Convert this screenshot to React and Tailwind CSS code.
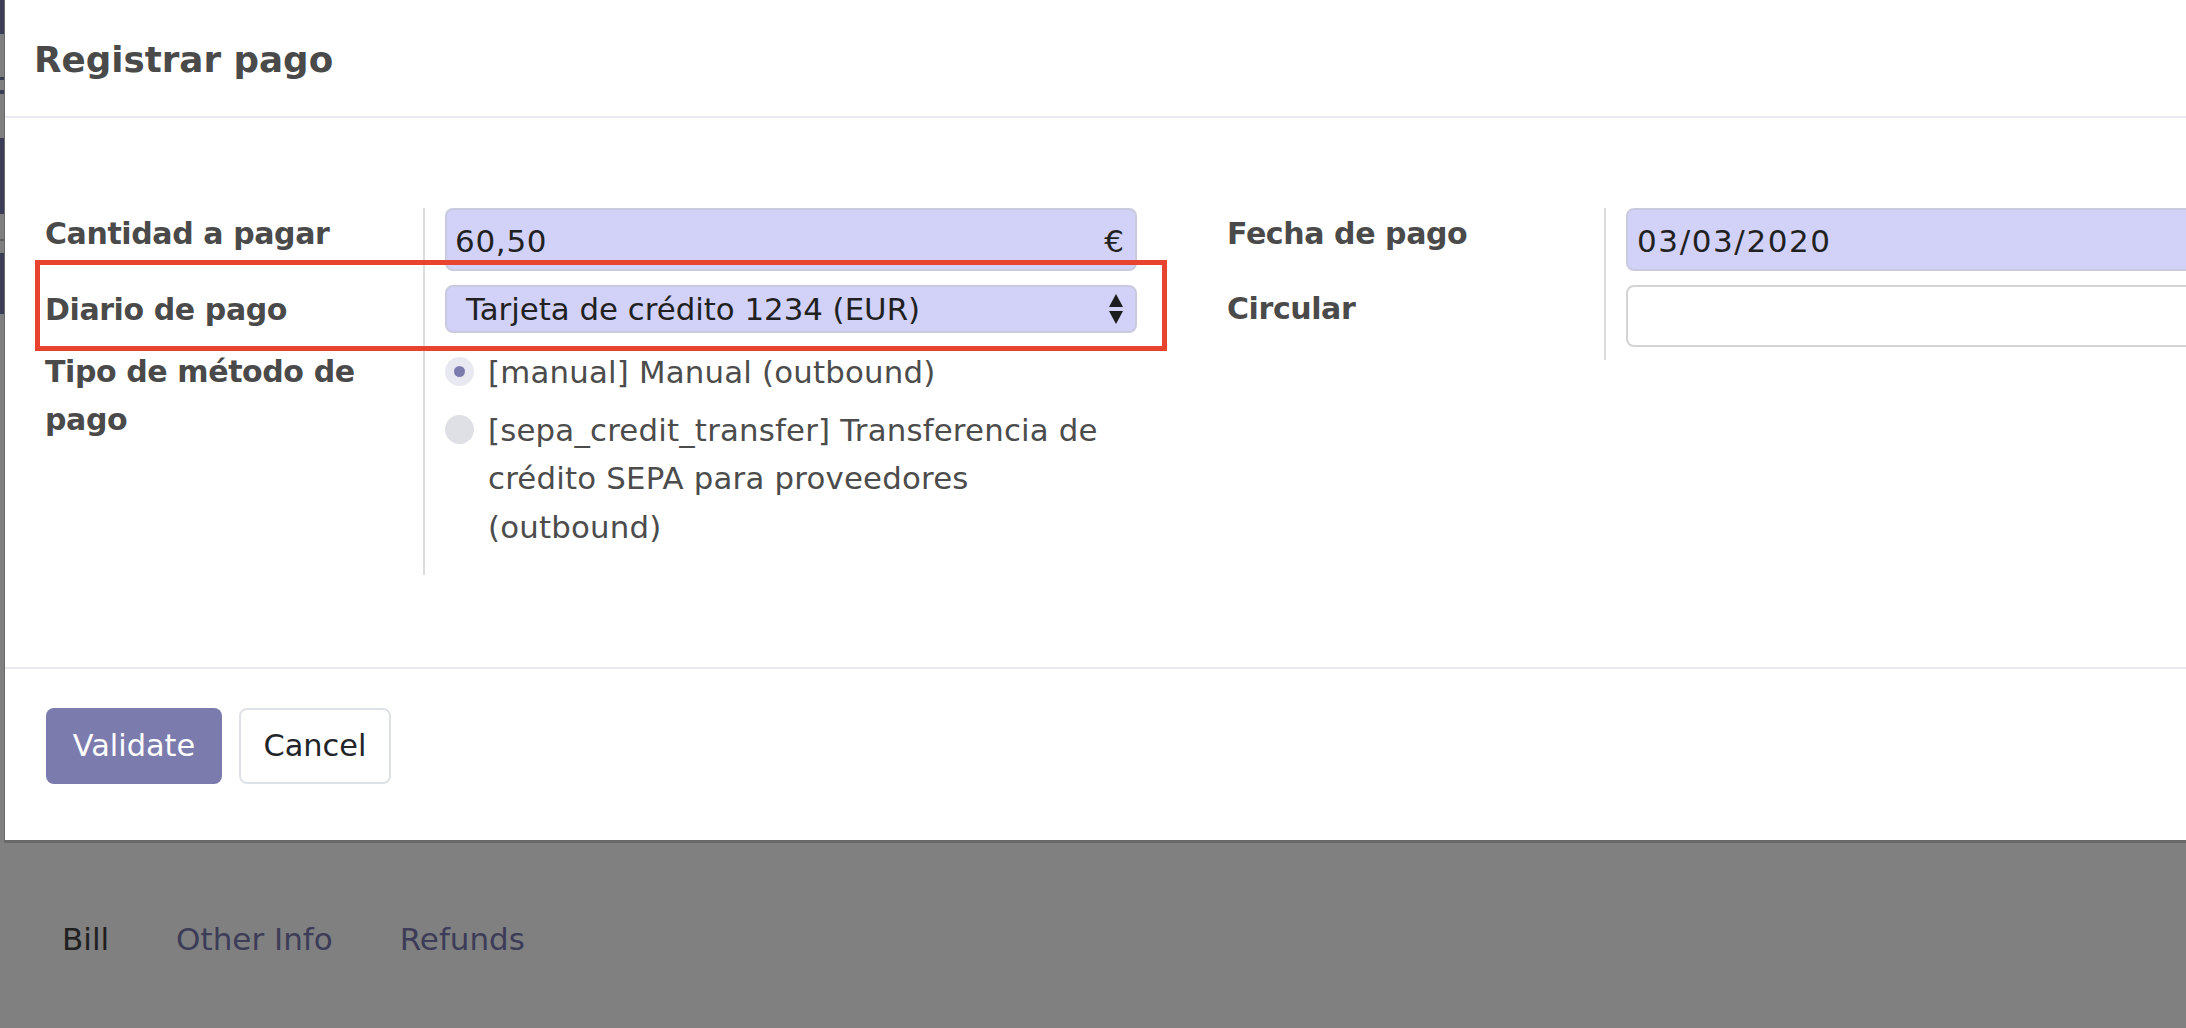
import React from 'react';

const navy = 'bg-[#3b3c56]';

function Strip() {
  // dimmed page behind the dialog, only a sliver shows on the left
  return (
    <div className="w-[4px] shrink-0 flex flex-col bg-[#7f7f7f]">
      <div className={`h-[34px] ${navy}`} />
      <div className="h-[43px]" />
      <div className={`h-[3px] ${navy}`} />
      <div className="h-[10px]" />
      <div className={`h-[4px] ${navy}`} />
      <div className="h-[44px]" />
      <div className={`h-[76px] ${navy}`} />
      <div className="h-[25px]" />
      <div className="h-[2px] bg-[#5c5c5c]" />
      <div className="h-[12px]" />
      <div className={`h-[61px] ${navy}`} />
    </div>
  );
}

function UpDown() {
  return (
    <svg width="14" height="30" viewBox="0 0 14 30" className="shrink-0">
      <path d="M7 0 L14 13 L0 13 Z" fill="#1c1c1c" />
      <path d="M0 17 L14 17 L7 30 Z" fill="#1c1c1c" />
    </svg>
  );
}

function Radio({ checked, children }) {
  return (
    <div className="flex items-start">
      <span
        className={`mt-[9px] w-[29px] h-[29px] rounded-full shrink-0 flex items-center justify-center ${
          checked ? 'bg-[#e8e8f1]' : 'bg-[#dfe0e6]'
        }`}
      >
        {checked && <span className="w-[11px] h-[11px] rounded-full bg-[#7c7bad]" />}
      </span>
      <span className="ml-[14px] max-w-[620px] text-[30.8px] leading-[48.5px] text-[#4c4c4c] tracking-[0.2px]">{children}</span>
    </div>
  );
}

const label = 'text-[30px] leading-[48px] font-bold text-[#4a4a4a] tracking-[-0.4px]';
const cell = 'border-l-2 border-[#dcdcdc] pl-[20px]';

export default function App() {
  return (
    <div className="w-full h-[1028px] bg-[#808080] overflow-hidden flex flex-col font-['DejaVu_Sans',sans-serif]">
      <div className="flex h-[843px] shrink-0">
        <Strip />
        <div className="relative flex-1 min-w-0 bg-white border-l border-b-[3px] border-[#6a6a6a] flex flex-col overflow-hidden">
          <header className="h-[118px] shrink-0 border-b-2 border-[#e9e9ef] pt-[42px] pl-[29px]">
            <h4 className="text-[35.7px] leading-none font-bold text-[#4a4a4a]">Registrar pago</h4>
          </header>

          <main className="flex-1 pt-[90px] pl-[40px] flex gap-[90px]">
            <div className="grid grid-cols-[378px_714px] shrink-0 content-start">
              <div className={`${label} pt-[2px]`}>Cantidad a pagar</div>
              <div className={`${cell} pb-[14px]`}>
                <div className="h-[63px] w-[692px] rounded-[8px] border-2 border-[#c9cade] bg-[#d2d2f9] flex items-center pt-[4px] pl-[8px] pr-[11px] text-[31px] leading-none text-[#212121]">
                  <span className="tracking-[0.7px]">60,50</span>
                  <span className="ml-auto">€</span>
                </div>
              </div>

              <div className={`${label} pt-[1px]`}>Diario de pago</div>
              <div className={`${cell} pb-[12px]`}>
                <div className="h-[48px] w-[692px] rounded-[8px] border-2 border-[#c9cade] bg-[#d2d2f9] flex items-center pl-[19px] pr-[12px] text-[30.8px] leading-none text-[#212121]">
                  <span>Tarjeta de crédito 1234 (EUR)</span>
                  <span className="ml-auto flex">
                    <UpDown />
                  </span>
                </div>
              </div>

              <div className={`${label} pt-[3px]`}>Tipo de método de pago</div>
              <div className={`${cell} pt-[3px] pb-[24px] flex flex-col gap-[9px]`}>
                <Radio checked>[manual] Manual (outbound)</Radio>
                <Radio>[sepa_credit_transfer] Transferencia de crédito SEPA para proveedores (outbound)</Radio>
              </div>
            </div>

            <div className="grid grid-cols-[377px_714px] shrink-0 content-start">
              <div className={`${label} pt-[2px]`}>Fecha de pago</div>
              <div className={`${cell} pb-[14px]`}>
                <div className="h-[63px] w-[692px] rounded-l-[8px] border-2 border-[#c9cade] bg-[#d2d2f9] flex items-center pt-[4px] pl-[9px] text-[31px] leading-none text-[#212121]">
                  <span className="tracking-[1.6px]">03/03/2020</span>
                </div>
              </div>

              <div className={label}>Circular</div>
              <div className={`${cell} pb-[13px]`}>
                <div className="h-[62px] w-[692px] rounded-[8px] border-2 border-[#d4d4d4] bg-white" />
              </div>
            </div>
          </main>

          <footer className="h-[173px] shrink-0 border-t-2 border-[#e9e9ef] pt-[39px] pl-[41px] flex items-start gap-[17px]">
            <button className="w-[176px] h-[76px] rounded-[8px] bg-[#7c7bad] text-white text-[30.4px] leading-none">
              Validate
            </button>
            <button className="w-[152px] h-[76px] rounded-[8px] border-2 border-[#dee2e6] bg-white text-[#212529] text-[30.4px] leading-none">
              Cancel
            </button>
          </footer>

          {/* highlight annotation drawn over the form */}
          <div className="pointer-events-none absolute left-[30px] top-[260px] w-[1132px] h-[91px] border-[5px] border-[#e8432f]" />
        </div>
      </div>

      <nav className="flex pt-[81px] pl-[29px] text-[31px] leading-none">
        <span className="px-[33px] text-[#1f1f1f]">Bill</span>
        <span className="px-[34px] text-[#3c3c58]">Other Info</span>
        <span className="px-[33px] text-[#3c3c58]">Refunds</span>
      </nav>
    </div>
  );
}
